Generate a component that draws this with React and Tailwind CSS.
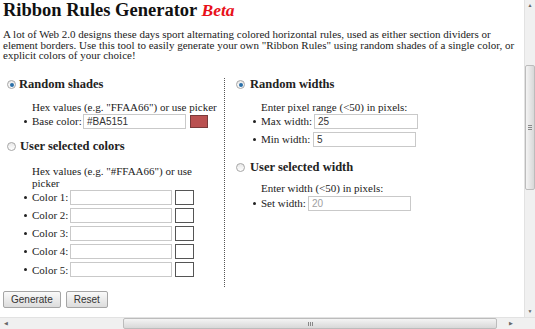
import React from "react";

const serif = { fontFamily: '"Liberation Serif", "Times New Roman", serif' };

function Radio({ checked }) {
  return (
    <span className="relative inline-block w-[9px] h-[9px] rounded-full border border-[#a6a6a6] bg-gradient-to-b from-[#e8e8e8] to-[#ffffff] shrink-0">
      {checked && (
        <span className="absolute left-[1.5px] top-[1.5px] w-[4px] h-[4px] rounded-full bg-[#2a6fa8]" />
      )}
    </span>
  );
}

function TextBox({ w, value, muted }) {
  return (
    <span
      className={`inline-flex items-center h-[15px] border border-[#c9c9c9] bg-white px-[3px] text-[10px] ${muted ? "text-[#a0a0a0]" : "text-[#333]"} ${w}`}
      style={{ fontFamily: '"Liberation Sans", Arial, sans-serif' }}
    >
      {value}
    </span>
  );
}

function Row({ label, labelW, children }) {
  return (
    <div className="flex items-center h-[15px]">
      <span className="w-[8px] flex items-center">
        <span className="w-[3px] h-[3px] rounded-full bg-[#222]" />
      </span>
      <span className={`whitespace-nowrap ${labelW}`}>{label}</span>
      {children}
    </div>
  );
}

export default function App() {
  return (
    <div className="w-[535px] h-[329px] flex flex-col overflow-hidden bg-white text-[#222]" style={serif}>
      <div className="flex flex-1 min-h-0">
        <div className="flex-1 pl-[3px] overflow-hidden">
          <h1 className="text-[18.5px] leading-[20px] font-bold text-[#111] mt-0 whitespace-nowrap">
            Ribbon Rules Generator <em className="text-[#e8101a] text-[17.5px]">Beta</em>
          </h1>
          <div className="mt-[9px] text-[11px] leading-[10.5px] text-[#222] whitespace-nowrap">
            <div>A lot of Web 2.0 designs these days sport alternating colored horizontal rules, used as either section dividers or</div>
            <div>element borders. Use this tool to easily generate your own "Ribbon Rules" using random shades of a single color, or</div>
            <div>explicit colors of your choice!</div>
          </div>
          <div className="flex mt-[17px] text-[11px]">
            <div className="w-[222px] border-r border-dotted border-[#555] pb-[10px]">
              <div className="flex items-center gap-[3px] pl-[4px] h-[14px] font-bold text-[12.5px]">
                <Radio checked /> Random shades
              </div>
              <div className="pl-[29px] mt-[9px] leading-[12px]">Hex values (e.g. "FFAA66") or use picker</div>
              <div className="pl-[21px] mt-[1px]">
                <Row label="Base color:" labelW="w-[51px]">
                  <TextBox w="w-[103px]" value="#BA5151" />
                  <span className="ml-[4px] w-[18px] h-[13px] bg-[#ba5151] border border-[#7a3a3a]" />
                </Row>
              </div>
              <div className="flex items-center gap-[4px] pl-[4px] mt-[11px] h-[14px] font-bold text-[12.5px]">
                <Radio /> User selected colors
              </div>
              <div className="pl-[29px] mt-[11px] leading-[12.5px]">
                Hex values (e.g. "#FFAA66") or use<br />picker
              </div>
              <div className="pl-[21px] mt-0 flex flex-col gap-[3.2px]">
                {[1, 2, 3, 4, 5].map((n) => (
                  <Row key={n} label={`Color ${n}:`} labelW="w-[38px]">
                    <TextBox w="w-[102px]" value="" />
                    <span className="ml-[3px] w-[19px] h-[15px] border border-[#555] bg-white" />
                  </Row>
                ))}
              </div>
            </div>
            <div className="flex-1 pl-[11px]">
              <div className="flex items-center gap-[5px] h-[14px] font-bold text-[12.5px]">
                <Radio checked /> Random widths
              </div>
              <div className="pl-[25px] mt-[9px] leading-[12px]">Enter pixel range (&lt;50) in pixels:</div>
              <div className="pl-[17px] mt-[1px] flex flex-col gap-[3px]">
                <Row label="Max width:" labelW="w-[53px]">
                  <TextBox w="w-[104px]" value="25" />
                </Row>
                <Row label="Min width:" labelW="w-[52px]">
                  <TextBox w="w-[103px]" value="5" />
                </Row>
              </div>
              <div className="flex items-center gap-[5px] mt-[14px] h-[14px] font-bold text-[12.5px]">
                <Radio /> User selected width
              </div>
              <div className="pl-[25px] mt-[7px] leading-[12px]">Enter width (&lt;50) in pixels:</div>
              <div className="pl-[17px] mt-[2px]">
                <Row label="Set width:" labelW="w-[47px]">
                  <TextBox w="w-[103px]" value="20" muted />
                </Row>
              </div>
            </div>
          </div>
          <div className="flex gap-[5px] mt-[4px]" style={{ fontFamily: '"Liberation Sans", Arial, sans-serif' }}>
            <button className="h-[17px] px-[7px] text-[10px] text-[#333] border border-[#a5a5a5] rounded-[2px] bg-gradient-to-b from-[#fafafa] to-[#dcdcdc] leading-none">Generate</button>
            <button className="h-[17px] px-[7px] text-[10px] text-[#333] border border-[#a5a5a5] rounded-[2px] bg-gradient-to-b from-[#fafafa] to-[#dcdcdc] leading-none">Reset</button>
          </div>
        </div>
        <div className="w-[11px] bg-[#f0f0f0] border-l border-[#e2e2e2] flex flex-col items-center">
          <div className="h-[11px] flex items-center justify-center text-[#666] text-[5px] leading-none">▲</div>
          <div className="mt-[54px] w-[10px] h-[125px] rounded-[2px] border border-[#bcbcbc] bg-gradient-to-r from-[#f4f4f4] to-[#d8d8d8] flex items-center justify-center">
            <div className="flex flex-col gap-[1px]">
              <span className="w-[4px] h-px bg-[#888]" />
              <span className="w-[4px] h-px bg-[#888]" />
              <span className="w-[4px] h-px bg-[#888]" />
            </div>
          </div>
          <div className="flex-1" />
          <div className="h-[11px] flex items-center justify-center text-[#666] text-[5px] leading-none">▼</div>
        </div>
      </div>
      <div className="h-[12px] flex bg-[#f0f0f0] border-t border-[#e2e2e2]">
        <div className="w-[11px] flex items-center justify-center text-[#666] text-[5px] leading-none">◀</div>
        <div className="ml-[112px] w-[374px] h-full rounded-[2px] border border-[#bcbcbc] bg-gradient-to-b from-[#f4f4f4] to-[#d8d8d8] flex items-center justify-center">
          <div className="flex gap-[1px]">
            <span className="w-px h-[4px] bg-[#888]" />
            <span className="w-px h-[4px] bg-[#888]" />
            <span className="w-px h-[4px] bg-[#888]" />
          </div>
        </div>
        <div className="flex-1 flex items-center justify-center text-[#666] text-[5px] leading-none">▶</div>
        <div className="w-[11px] bg-[#f0f0f0]" />
      </div>
    </div>
  );
}
